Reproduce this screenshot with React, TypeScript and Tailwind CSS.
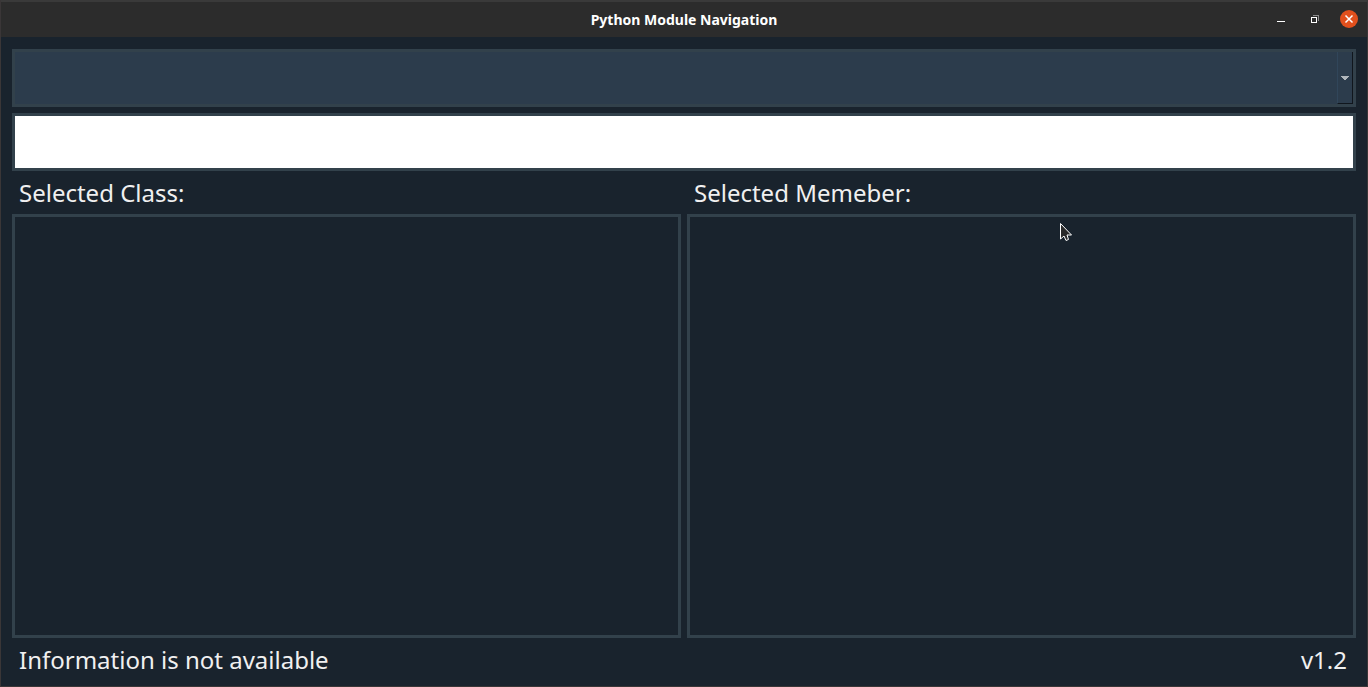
import { useState } from "react";

function TitleBar() {
  return (
    <header className="grid h-[37px] shrink-0 grid-cols-[1fr_auto_1fr] items-center border-t-2 border-[#3a3a3a] bg-[#2c2c2c]">
      <h1 className="col-start-2 text-sm font-bold text-white">Python Module Navigation</h1>
      <div className="flex items-center justify-end gap-4 pr-[9px] pb-[2px]">
        <button type="button" aria-label="Minimize" className="size-[18px]">
          <svg viewBox="0 0 18 18" className="size-[18px]" shapeRendering="crispEdges">
            <rect x="5" y="11" width="8" height="1" fill="#fff" />
          </svg>
        </button>
        <button type="button" aria-label="Restore" className="size-[18px]">
          <svg viewBox="0 0 18 18" className="size-[18px]" shapeRendering="crispEdges">
            <path d="M7 5h6v6h-1V6H7z" fill="#8c8c8c" />
            <rect x="5.5" y="7.5" width="5" height="5" fill="none" stroke="#fff" />
          </svg>
        </button>
        <button type="button" aria-label="Close" className="size-[18px]">
          <svg viewBox="0 0 18 18" className="size-[18px]">
            <circle cx="9" cy="9" r="9" fill="#e2501d" />
            <path d="M5.500 5.500l7 7M12.500 5.500l-7 7" stroke="#fff" strokeWidth="1.500" />
          </svg>
        </button>
      </div>
    </header>
  );
}

function ListPanel({ id, label }: { id: string; label: string }) {
  return (
    <section className="flex min-w-0 flex-1 flex-col">
      <h2 id={id} className="flex h-[43px] shrink-0 items-center px-[7px] text-2xl">
        {label}
      </h2>
      <ul role="listbox" aria-labelledby={id} tabIndex={0} className="flex-1 overflow-auto border-3 border-[#32414b] outline-none" />
    </section>
  );
}

export default function App() {
  const [query, setQuery] = useState("");

  return (
    <div className="relative flex h-screen flex-col border-x border-b border-[#3a3637] bg-[#19232d] font-['Noto_Sans',sans-serif] text-[#f0f0f0]">
      <TitleBar />
      <main className="flex min-h-0 flex-1 flex-col px-[11px] pt-3">
        <div className="relative h-[58px] shrink-0">
          <select aria-label="Module" className="block size-full appearance-none border-3 border-[#32414b] bg-[#2c3c4c] px-2 text-2xl outline-none">
            <option value=""></option>
          </select>
          <span className="pointer-events-none absolute inset-y-[3px] right-[3px] flex w-4 items-center justify-center border-r-1 border-b-1 border-l-1 border-r-[#10161d] border-b-[#10161d] border-l-[#31465a] bg-[#2c3c4c]">
            <svg viewBox="0 0 8 4" className="h-1 w-2" shapeRendering="crispEdges">
              <path d="M0 0h8v1H7v1H6v1H5v1H3V3H2V2H1V1H0z" fill="#b0b6bb" />
            </svg>
          </span>
        </div>
        <input
          type="text"
          aria-label="Search"
          value={query}
          onChange={(e) => setQuery(e.target.value)}
          className="mt-[6px] h-[58px] w-full shrink-0 border-3 border-[#32414b] bg-white px-2 text-2xl text-[#19232d] outline-none"
        />
        <div className="flex min-h-0 flex-1 gap-[6px]">
          <ListPanel id="class-label" label="Selected Class:" />
          <ListPanel id="member-label" label="Selected Memeber:" />
        </div>
      </main>
      <footer className="flex h-12 shrink-0 items-center justify-between pr-5 pb-1 pl-[18px] text-2xl">
        <span>Information is not available</span>
        <span>v1.2</span>
      </footer>
      <svg viewBox="0 0 14 20" className="pointer-events-none absolute top-[222px] left-[1058px] h-5 w-[14px]" aria-hidden="true">
        <path d="M1.500 1.500v15.500l3.500-3 2 4.500 2.500-1-1.500-4.500h4.500z" fill="#2a2a2a" stroke="#fff" />
      </svg>
    </div>
  );
}
